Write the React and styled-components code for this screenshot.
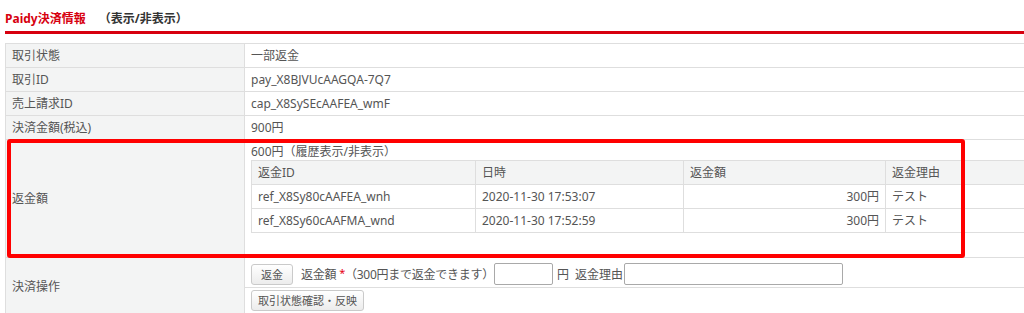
import React from 'react';
import styled, { createGlobalStyle } from 'styled-components';

const refunds = [
  { id: 'ref_X8Sy80cAAFEA_wnh', date: '2020-11-30 17:53:07', amount: '300円', reason: 'テスト' },
  { id: 'ref_X8Sy60cAAFMA_wnd', date: '2020-11-30 17:52:59', amount: '300円', reason: 'テスト' },
];

const info = [
  { label: '取引状態', value: '一部返金' },
  { label: '取引ID', value: 'pay_X8BJVUcAAGQA-7Q7' },
  { label: '売上請求ID', value: 'cap_X8SySEcAAFEA_wmF' },
  { label: '決済金額(税込)', value: '900円' },
];

const App = () => {
  return (
    <Page>
      <GlobalStyle />
      <Heading>
        <HeadingTitle>Paidy決済情報</HeadingTitle>
        <HeadingToggle>（表示/非表示）</HeadingToggle>
      </Heading>
      <TableWrap>
        <InfoTable>
          <colgroup>
            <LabelCol />
            <col />
          </colgroup>
          <tbody>
            {info.map((row) => (
              <tr key={row.label}>
                <LabelCell>{row.label}</LabelCell>
                <ValueCell>{row.value}</ValueCell>
              </tr>
            ))}
            <tr>
              <LabelCell>返金額</LabelCell>
              <RefundCell>
                <RefundSummary>600円（履歴表示/非表示）</RefundSummary>
                <HistoryTable>
                  <colgroup>
                    <HistoryCol $width={224} />
                    <HistoryCol $width={208} />
                    <HistoryCol $width={202} />
                    <col />
                  </colgroup>
                  <thead>
                    <tr>
                      <HistoryHead>返金ID</HistoryHead>
                      <HistoryHead>日時</HistoryHead>
                      <HistoryHead>返金額</HistoryHead>
                      <HistoryHead>返金理由</HistoryHead>
                    </tr>
                  </thead>
                  <tbody>
                    {refunds.map((r) => (
                      <tr key={r.id}>
                        <HistoryCell>{r.id}</HistoryCell>
                        <HistoryCell>{r.date}</HistoryCell>
                        <HistoryCell $right>{r.amount}</HistoryCell>
                        <HistoryCell>{r.reason}</HistoryCell>
                      </tr>
                    ))}
                  </tbody>
                </HistoryTable>
              </RefundCell>
            </tr>
            <tr>
              <LabelCell>決済操作</LabelCell>
              <ActionCell>
                <ActionLine>
                  <Button $pad={9}>返金</Button>
                  <FieldLabel $left={8} $right={0} $tight>
                    返金額 <Required>*</Required>（300円まで返金できます）
                  </FieldLabel>
                  <TextInput $width={59} />
                  <FieldLabel $left={4} $right={0}>円</FieldLabel>
                  <FieldLabel $left={6} $right={1}>返金理由</FieldLabel>
                  <TextInput $width={219} />
                </ActionLine>
                <Button $pad={6} $top>取引状態確認・反映</Button>
              </ActionCell>
            </tr>
          </tbody>
        </InfoTable>
        <Highlight />
      </TableWrap>
    </Page>
  );
};

const GlobalStyle = createGlobalStyle`
  html, body {
    margin: 0;
    background: #fff;
    overflow: hidden;
  }
  body {
    font-family: "Noto Sans", "Noto Sans CJK JP", sans-serif;
    font-size: 12px;
    color: #555;
  }
`;

const Page = styled.div`
  width: 1040px;
  padding: 11px 0 0 5px;
`;

const Heading = styled.div`
  font-size: 12px;
  font-weight: bold;
  line-height: 16px;
  padding-bottom: 4px;
  border-bottom: 3px solid #d7000f;
  margin-bottom: 9px;
`;

const HeadingTitle = styled.span`
  color: #d7000f;
`;

const HeadingToggle = styled.span`
  color: #333;
  margin-left: 13px;
`;

const TableWrap = styled.div`
  position: relative;
`;

const InfoTable = styled.table`
  width: 100%;
  border-collapse: collapse;
  table-layout: fixed;
  font-size: 12px;
`;

const LabelCol = styled.col`
  width: 239px;
`;

const LabelCell = styled.th`
  background: #f3f4f4;
  border: 1px solid #dedede;
  padding: 3px 6px;
  line-height: 17px;
  font-weight: normal;
  text-align: left;
  vertical-align: middle;
`;

const ValueCell = styled.td`
  border: 1px solid #dedede;
  padding: 3px 6px;
  line-height: 17px;
`;

const RefundCell = styled(ValueCell)`
  padding: 3px 6px 24px;
`;

const RefundSummary = styled.div`
  line-height: 17px;
`;

const HistoryTable = styled.table`
  width: 100%;
  border-collapse: collapse;
  table-layout: fixed;
`;

const HistoryCol = styled.col`
  width: ${(p) => p.$width}px;
`;

const HistoryHead = styled.th`
  background: #f3f4f4;
  border: 1px solid #dedede;
  padding: 3px 6px;
  line-height: 17px;
  font-weight: normal;
  text-align: left;
`;

const HistoryCell = styled.td`
  border: 1px solid #dedede;
  padding: 3px 6px;
  line-height: 17px;
  text-align: ${(p) => (p.$right ? 'right' : 'left')};
  white-space: nowrap;
`;

const ActionCell = styled(ValueCell)`
  padding: 4px 6px 3px;
`;

const ActionLine = styled.div`
  display: flex;
  align-items: center;
  height: 24px;
  padding-bottom: 1px;
  border-bottom: 1px solid #dedede;
  margin-left: -6px;
  padding-left: 6px;
  margin-right: -6px;
`;

const Button = styled.button`
  height: 21px;
  padding: 0 ${(p) => p.$pad}px;
  margin-top: ${(p) => (p.$top ? '2px' : '0')};
  border: 1px solid #cacaca;
  border-radius: 3px;
  background: linear-gradient(#ffffff, #ececec);
  font-family: inherit;
  font-size: 11px;
  color: #555;
  line-height: 19px;
  display: block;
`;

const FieldLabel = styled.span`
  margin-left: ${(p) => p.$left}px;
  margin-right: ${(p) => p.$right}px;
  letter-spacing: ${(p) => (p.$tight ? '-0.25px' : '0')};
  font-size: 12px;
  white-space: nowrap;
`;

const Required = styled.span`
  color: #e60012;
  font-size: 11px;
  position: relative;
  top: -2px;
`;

const TextInput = styled.input`
  box-sizing: border-box;
  width: ${(p) => p.$width}px;
  height: 22px;
  border: 1px solid #a9a9a9;
  border-radius: 2px;
  background: #fff;
`;

const Highlight = styled.div`
  position: absolute;
  left: 2px;
  top: 96px;
  width: 958px;
  height: 119px;
  box-sizing: border-box;
  border: 4px solid #ff0000;
  border-radius: 3px;
  pointer-events: none;
`;

export default App;
